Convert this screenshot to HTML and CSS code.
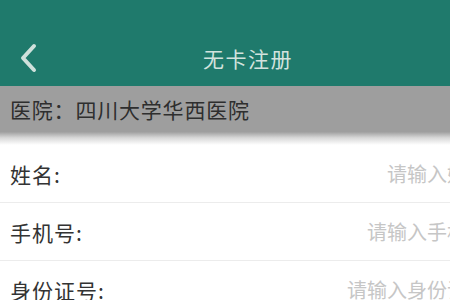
FILE: index.html
```html
<!DOCTYPE html>
<html lang="zh-CN">
<head>
<meta charset="utf-8">
<link rel="stylesheet" href="styles.css">
</head>
<body>
<div class="app">
  <header class="topbar">
    <div class="back">
      <svg width="20" height="30" viewBox="0 0 20 30"><path d="M15 3 L4 15 L15 27" fill="none" stroke="#cfe1dc" stroke-width="4" stroke-linecap="round" stroke-linejoin="round"/></svg>
    </div>
    <div class="title">无卡注册</div>
    <div class="spacer"></div>
  </header>
  <div class="hospital">医院：四川大学华西医院</div>
  <div class="fade"></div>
  <div class="form">
    <div class="row"><span class="label">姓名:</span><span class="ph">请输入姓名</span></div>
    <div class="row"><span class="label">手机号:</span><span class="ph">请输入手机号</span></div>
    <div class="row"><span class="label">身份证号:</span><span class="ph">请输入身份证号</span></div>
  </div>
</div>
</body>
</html>
```
FILE: styles.css
```css
html, body {
  margin: 0;
  padding: 0;
  width: 450px;
  height: 300px;
  overflow: hidden;
  background: #ffffff;
}
.app {
  width: 496px;
  font-family: "Noto Sans CJK SC", "Noto Sans", sans-serif;
}
.topbar {
  height: 56px;
  padding-top: 30px;
  background: #1f7a6c;
  display: grid;
  grid-template-columns: 1fr auto 1fr;
  align-items: center;
}
.back {
  padding-left: 19px;
  display: flex;
  align-items: center;
}
.title {
  font-size: 21px;
  color: #d2e3de;
  letter-spacing: 1.5px;
}
.hospital {
  height: 46px;
  background: #9e9e9e;
  display: flex;
  align-items: center;
  padding-left: 10px;
  font-size: 21px;
  color: #2e2e2e;
  letter-spacing: 0.8px;
}
.fade {
  height: 13px;
  background: linear-gradient(#a0a0a0, #d8d8d8 45%, #ffffff);
}
.row {
  height: 57px;
  display: flex;
  align-items: center;
  justify-content: space-between;
  padding: 0 9px 0 10px;
  border-bottom: 1px solid #ececec;
}
.label {
  font-size: 21px;
  color: #333333;
  letter-spacing: 1px;
}
.ph {
  font-size: 20px;
  color: #c6c6c6;
}
```
